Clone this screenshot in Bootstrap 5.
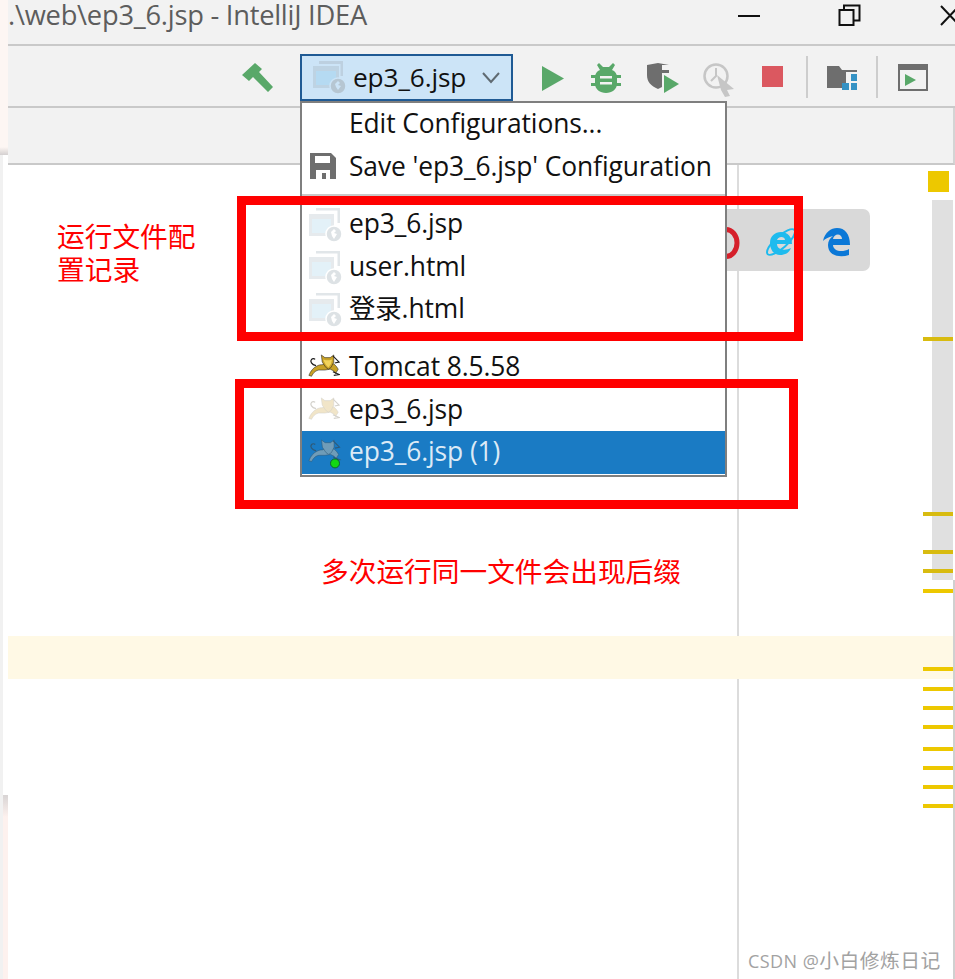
<!DOCTYPE html>
<html lang="zh">
<head>
<meta charset="utf-8">
<title>IntelliJ IDEA</title>
<link href="https://cdn.jsdelivr.net/npm/bootstrap@5.3.0/dist/css/bootstrap.min.css" rel="stylesheet">
<style>
html,body{margin:0;height:979px;overflow:hidden;background:#fff}
body{font-family:"Open Sans","Noto Sans CJK SC",sans-serif;position:relative;width:955px}
.shot{height:979px;width:955px}
.edge{width:8px;flex:none;background:linear-gradient(90deg,#f1f1f1 0 3px,#fff 3px);position:relative}
.edge-top{height:155px;background:linear-gradient(#fdf6f3 0 147px,#d4d0d0)}
.edge-fade{position:absolute;left:3px;width:5px;top:795px;height:184px;background:linear-gradient(#d8d4d4,#fdf1ee 22px)}
.idepane{flex:1;min-width:0}
.titlebar{height:46px;background:#f2f2f2;border-bottom:2px solid #c9c9c9;font-size:27.3px;color:#5d5d5d;line-height:30px;letter-spacing:-.25px;white-space:nowrap;position:relative}
.winctl{position:absolute;top:0}
.toolbar{height:62px;background:#f2f2f2;border-bottom:2px solid #c9c9c9;position:relative}
.tool{position:absolute}
.tool-sep{position:absolute;top:10px;width:2px;height:42px;background:#cdcdcd}
.combo{position:absolute;left:292px;top:8px;width:213px;height:47px;background:#cce4f7;border:2px solid #1f5a94;font-size:26.2px;color:#111;line-height:42px;padding-left:51px;letter-spacing:-.1px}
.tabstrip{height:57px;background:#f2f2f2;border-bottom:2px solid #c9c9c9;border-right:2px solid #d4d4d4}
.editor{height:814px;position:relative;background:#fff}
.margin-line{position:absolute;left:729px;top:0;bottom:0;width:2px;background:#dcdcdc}
.browsers{position:absolute;left:690px;top:44px;width:172px;height:62px;background:#d9d9d9;border-radius:7px}
.status-sq{position:absolute;left:920px;top:6px;width:21px;height:21px;background:#edc800}
.thumb{position:absolute;left:924px;top:35px;width:21px;height:380px;background:#e0e0e0}
.rail{position:absolute;left:945px;top:415px;bottom:0;width:2px;background:#d0d0d0}
.curline{position:absolute;left:0;right:0;top:471px;height:43px;background:#fff9e5}
.tick{position:absolute;left:915px;width:30px;height:4px;background:#edc800}
.tick-over{background:#d8bb10}
.ide-menu{position:absolute;left:300px;top:101px;width:427px;background:#fff;border:2px solid #7f7f7f;font-size:26.4px;color:#111;padding:0 0 1px;letter-spacing:-.1px}
.ide-item{height:42.6px;line-height:41px;padding-left:47px;position:relative;white-space:nowrap}
.ide-item svg{position:absolute;left:6px;top:4px}
.ide-item.on{background:#1a7bc4;color:#dceaf6}
.ide-sep{height:15px;position:relative}
.ide-sep::after{content:"";position:absolute;left:0;right:0;top:6px;height:2px;background:#c9c9c9}
.redbox{position:absolute;border:9px solid #ff0000;background:transparent}
.redlabel{position:absolute;color:#ff0000;font-family:"Noto Sans CJK SC",sans-serif;font-size:27.7px;line-height:33px;font-weight:400;white-space:nowrap}
.wmark{position:absolute;left:748px;top:946px;font-size:19.8px;line-height:28px;color:#a2a2a2;font-family:"Noto Sans CJK SC",sans-serif;white-space:nowrap;letter-spacing:.45px}
.wmark-latin{font-family:"Open Sans",sans-serif;font-size:18px}
</style>
</head>
<body>
<svg width="0" height="0" class="d-block position-absolute">
  <defs>
    <g id="webfile">
      <path d="M8 1h24v2.500H8zM29.500 3h2.500v13h-2.500z" fill="#e1e6e9"/>
      <path d="M1 7h25v22H1z" fill="#e6eaed"/>
      <path d="M4 12h19v14H4z" fill="#e3f1f8"/>
      <circle cx="26" cy="27" r="8" fill="#dde2e5" stroke="#fff" stroke-width="1.500"/>
      <path d="M23 25l3-3 2 2-2 2 3 1-3 5-2-3z" fill="#fff"/>
    </g>
    <g id="cat">
      <path d="M1 25c2-5 5-9 10-11 2-1 4-1 5-1l2-1 11 0 3 3 2 3-3 5-2-3-4-2-6 1-6 0c-4 0-7 3-9 7z" stroke-width=".6"/>
      <path d="M15 2l4 3h6l4-3 0 8-3 6-3 2-3-2-4-6z" stroke-width=".6"/>
      <path d="M9 14C4 13 2 9 4 7c1-1 3-1 4 0" fill="none" stroke-width="1.400"/>
      <path d="M28 3l7 7-5 1M28 21l7 3-6 1" fill="none" stroke-width="1.200"/>
    </g>
  </defs>
</svg>
<div class="shot d-flex">
  <div class="edge"><div class="edge-top"></div><div class="edge-fade"></div></div>
  <div class="idepane d-flex flex-column">
    <div class="titlebar">
      <span>.\web\ep3_6.jsp - IntelliJ IDEA</span>
      <svg class="winctl" style="left:730px" width="24" height="32" viewBox="0 0 24 32"><path d="M0 16h22" stroke="#111" stroke-width="2"/></svg>
      <svg class="winctl" style="left:830px" width="24" height="32" viewBox="0 0 24 32"><path d="M1.500 10h14v15h-14z M6 10V5.500h15.500v15H16" fill="none" stroke="#111" stroke-width="2"/></svg>
      <svg class="winctl" style="left:932px" width="15" height="32" viewBox="0 0 15 32"><path d="M1 6l18 19M19 6L1 25" stroke="#111" stroke-width="2" fill="none"/></svg>
    </div>
    <div class="toolbar">
      <svg class="tool" style="left:233px;top:16px" width="34" height="32" viewBox="0 0 34 32"><path d="M1 13L14 1l7 6-3 3 14 15-5 5-15-15-4 4z" fill="#59a869"/></svg>
      <div class="combo">ep3_6.jsp
        <svg class="position-absolute" style="left:9px;top:3px" width="36" height="36" viewBox="0 0 36 36"><path d="M8 2h24v3H8zM29.500 5H32v12h-2.500z" fill="#bdd0e0"/><path d="M2 7h26v22H2z" fill="#bed3e3"/><path d="M5 12h20v14H5z" fill="#b5daf2"/><circle cx="27" cy="27" r="8" fill="#b6c6d2" stroke="#cce4f7" stroke-width="1.500"/><path d="M24 25l3-3 2 2-2 2 3 1-3 4-2-3z" fill="#cce4f7"/></svg>
        <svg class="position-absolute" style="left:179px;top:15px" width="20" height="14" viewBox="0 0 20 14"><path d="M2 2l8 9 8-9" fill="none" stroke="#5f6a72" stroke-width="2"/></svg>
      </div>
      <svg class="tool" style="left:534px;top:19px" width="24" height="27" viewBox="0 0 24 27"><path d="M0 1l22 12.500L0 26z" fill="#59a869"/></svg>
      <svg class="tool" style="left:583px;top:16px" width="30" height="32" viewBox="0 0 30 32"><g fill="#59a869"><path d="M8 1l4 4h6l4-4 2 2-3 5c3 1 5 4 5 7v7c0 5-5 9-11 9S4 27 4 22v-7c0-3 2-6 5-7L6 3z"/><path d="M0 13h5v3H0zM25 13h5v3h-5zM0 21h5v3H0zM25 21h5v3h-5z"/></g><path d="M9 14h12v2.500H9zM9 20h12v2.500H9z" fill="#f2f2f2"/></svg>
      <svg class="tool" style="left:638px;top:16px" width="34" height="32" viewBox="0 0 34 32"><path d="M1 3l11-2 11 2v8h-7v14l-4 2C5 24 1 20 1 13z" fill="#6e6e6e"/><path d="M16 3h7v5h-7z" fill="#f2f2f2"/><path d="M18 13l15 9-15 9z" fill="#59a869"/></svg>
      <svg class="tool" style="left:694px;top:16px" width="36" height="36" viewBox="0 0 36 36"><circle cx="14" cy="14" r="11.500" fill="none" stroke="#c6c6c6" stroke-width="2.500"/><path d="M14 6v8l-5 5" fill="none" stroke="#c6c6c6" stroke-width="2"/><path d="M15 13l17 14-7 1 3 6-5 1-4-7z" fill="#c6c6c6"/></svg>
      <div class="tool" style="left:754px;top:20px;width:21px;height:21px;background:#db5860"></div>
      <div class="tool-sep" style="left:798px"></div>
      <svg class="tool" style="left:819px;top:20px" width="33" height="28" viewBox="0 0 33 28"><path d="M0 0h12l3 4h15v2H19v16H0z" fill="#6e6e6e"/><path d="M15 17h7v7h-7zM24 17h6v7h-6zM24 8h6v7h-6z" fill="#3592c4"/></svg>
      <div class="tool-sep" style="left:868px"></div>
      <svg class="tool" style="left:890px;top:18px" width="30" height="27" viewBox="0 0 30 27"><path d="M0 0h30v27H0z" fill="#6e6e6e"/><path d="M2 6h26v19H2z" fill="#f2f2f2"/><path d="M7 10l11 6-11 6z" fill="#59a869"/></svg>
    </div>
    <div class="tabstrip"></div>
    <div class="editor">
      <div class="margin-line"></div>
      <div class="browsers">
        <svg class="position-absolute" style="left:14px;top:18px" width="28" height="32" viewBox="0 0 28 32"><ellipse cx="14" cy="16" rx="11" ry="13.500" fill="none" stroke="#d5202b" stroke-width="5"/></svg>
        <svg class="position-absolute" style="left:67px;top:17px" width="32" height="32" viewBox="0 0 32 32"><path fill-rule="evenodd" d="M5 17C5 10 10 6 16 6c7 0 11 5 11 12H12c0 6 8 7 14 4-2 5-6 7-11 7-6 0-10-5-10-12zm7-3h8c0-4-7-4-8 0z" fill="#1ebbee"/><ellipse cx="16" cy="16" rx="18" ry="6" transform="rotate(-42 16 16)" fill="none" stroke="#1ebbee" stroke-width="2"/></svg>
        <svg class="position-absolute" style="left:124px;top:18px" width="30" height="30" viewBox="0 0 30 30"><path fill-rule="evenodd" d="M1 14C3 5 9 1 15 1c8 0 13 6 13 17H11c0 6 9 8 16 4v6c-9 3-21 1-21-10 0-4 2-7 5-9-5 1-8 3-10 5zm10-2h9c0-6-8-6-9 0z" fill="#0b78d7"/></svg>
      </div>
      <div class="curline"></div>
      <div class="status-sq"></div>
      <div class="thumb"></div>
      <div class="rail"></div>
      <div class="tick tick-over" style="top:172px"></div>
      <div class="tick tick-over" style="top:347px"></div>
      <div class="tick tick-over" style="top:385px"></div>
      <div class="tick tick-over" style="top:404px"></div>
      <div class="tick" style="top:424px"></div>
      <div class="tick" style="top:502px"></div>
      <div class="tick" style="top:522px"></div>
      <div class="tick" style="top:541px"></div>
      <div class="tick" style="top:560px"></div>
      <div class="tick" style="top:582px"></div>
      <div class="tick" style="top:601px"></div>
      <div class="tick" style="top:620px"></div>
      <div class="tick" style="top:639px"></div>
    </div>
  </div>
</div>

<div class="ide-menu">
  <div class="ide-item">Edit Configurations...</div>
  <div class="ide-item">
    <svg width="28" height="28" viewBox="0 0 28 28" style="left:7px;top:6px"><path d="M1 1h21l5 5v21H1z" fill="#6e6e6e"/><path d="M6 4h15v7H6zM7 18h14v9H7z" fill="#fff"/><path d="M13 21h4v6h-4z" fill="#6e6e6e"/></svg>
    Save 'ep3_6.jsp' Configuration
  </div>
  <div class="ide-sep"></div>
  <div class="ide-item"><svg width="34" height="36" viewBox="0 0 34 36"><use href="#webfile"/></svg>ep3_6.jsp</div>
  <div class="ide-item"><svg width="34" height="36" viewBox="0 0 34 36"><use href="#webfile"/></svg>user.html</div>
  <div class="ide-item"><svg width="34" height="36" viewBox="0 0 34 36"><use href="#webfile"/></svg>登录.html</div>
  <div class="ide-sep"></div>
  <div class="ide-item"><svg width="32" height="27" viewBox="0 0 36 30" style="top:7px"><use href="#cat" fill="#c9a227" stroke="#1e1e1e"/><path d="M17 7l3 1 4 0 3-1-1 5-3 4-3-3z" fill="#f2d35a"/></svg>Tomcat 8.5.58</div>
  <div class="ide-item"><svg width="32" height="27" viewBox="0 0 36 30" style="top:7px"><use href="#cat" fill="#f1e5c8" stroke="#d4d2cc"/></svg>ep3_6.jsp</div>
  <div class="ide-item on"><svg width="36" height="31" viewBox="0 0 40 34" style="top:7px"><use href="#cat" fill="#6f9cb8" stroke="#2f5a78"/><circle cx="30" cy="28" r="5" fill="#13d813" stroke="#0f5f2a" stroke-width="1"/></svg>ep3_6.jsp (1)</div>
</div>

<div class="redbox" style="left:237px;top:196px;width:566px;height:145px"></div>
<div class="redbox" style="left:235px;top:379px;width:563px;height:130px"></div>
<div class="redlabel" style="left:57px;top:219px">运行文件配<br>置记录</div>
<div class="redlabel" style="left:321px;top:554px">多次运行同一文件会出现后缀</div>
<div class="wmark"><span class="wmark-latin">CSDN @</span>小白修炼日记</div>

<script src="https://cdn.jsdelivr.net/npm/bootstrap@5.3.0/dist/js/bootstrap.bundle.min.js"></script>
</body>
</html>
